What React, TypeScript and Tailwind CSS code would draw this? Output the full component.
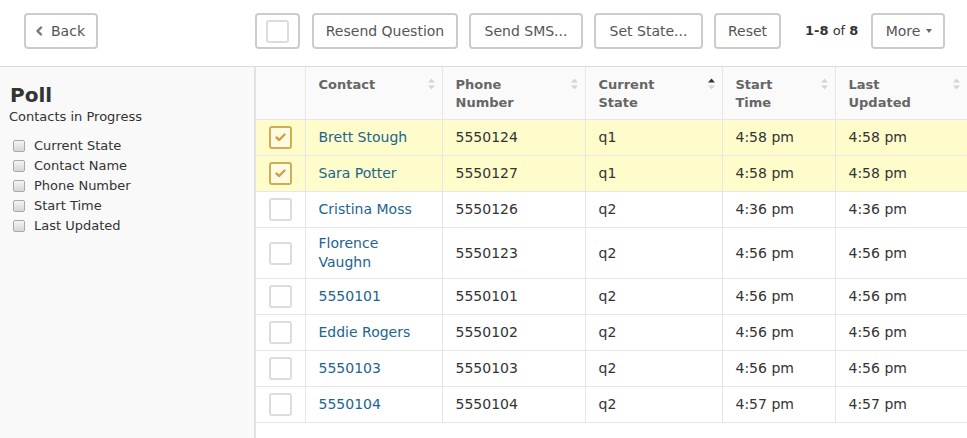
import React from "react";

type Row = { name: string; phone: string; state: string; start: string; updated: string; checked?: boolean };

const rows: Row[] = [
  { name: "Brett Stough", phone: "5550124", state: "q1", start: "4:58 pm", updated: "4:58 pm", checked: true },
  { name: "Sara Potter", phone: "5550127", state: "q1", start: "4:58 pm", updated: "4:58 pm", checked: true },
  { name: "Cristina Moss", phone: "5550126", state: "q2", start: "4:36 pm", updated: "4:36 pm" },
  { name: "Florence Vaughn", phone: "5550123", state: "q2", start: "4:56 pm", updated: "4:56 pm" },
  { name: "5550101", phone: "5550101", state: "q2", start: "4:56 pm", updated: "4:56 pm" },
  { name: "Eddie Rogers", phone: "5550102", state: "q2", start: "4:56 pm", updated: "4:56 pm" },
  { name: "5550103", phone: "5550103", state: "q2", start: "4:56 pm", updated: "4:56 pm" },
  { name: "5550104", phone: "5550104", state: "q2", start: "4:57 pm", updated: "4:57 pm" },
];

function SortIcon({ active }: { active?: boolean }) {
  return (
    <svg width="9" height="14" viewBox="0 0 9 14" className="shrink-0 mt-[1px]">
      <path d="M4.5 1.5 L8 5.5 L1 5.5 Z" fill={active ? "#333" : "#d4d4d4"} />
      <path d="M4.5 12.5 L8 8.5 L1 8.5 Z" fill="#d4d4d4" />
    </svg>
  );
}

function Check({ checked }: { checked?: boolean }) {
  if (checked) {
    return (
      <div className="w-[23px] h-[23px] rounded-[3px] border-2 border-[#cfae52] bg-[#fffbe3] flex items-center justify-center">
        <svg width="11" height="9" viewBox="0 0 11 9">
          <path d="M1.5 4.5 L4.2 7 L9.5 1.5" stroke="#c9a440" strokeWidth="2.4" fill="none" strokeLinecap="round" strokeLinejoin="round" />
        </svg>
      </div>
    );
  }
  return <div className="w-[23px] h-[23px] rounded-[3px] border-2 border-[#dcdcdc] bg-white" />;
}

function Btn({ children, className = "" }: { children: React.ReactNode; className?: string }) {
  return (
    <div className={"h-[36px] flex items-center justify-center rounded-[4px] border-2 border-[#cccccc] bg-white text-[14px] text-[#555] " + className}>
      {children}
    </div>
  );
}

function Header({ lines, active }: { lines: string[]; active?: boolean }) {
  return (
    <th className="align-top text-left border-r border-b border-[#e6e6e6] pl-[13px] pr-[6px] pt-[9px] pb-[7px] font-bold text-[13px] leading-[18px] text-[#666]">
      <div className="flex justify-between items-start">
        <span>
          {lines.map((l, i) => (
            <React.Fragment key={i}>
              {i > 0 && <br />}
              {l}
            </React.Fragment>
          ))}
        </span>
        <SortIcon active={active} />
      </div>
    </th>
  );
}

function SideCheck({ label }: { label: string }) {
  return (
    <div className="flex items-center h-[20px]">
      <div className="w-[12px] h-[12px] ml-[13px] rounded-[2px] border border-[#a9a9a9] bg-gradient-to-b from-[#f4f4f4] to-[#d6d6d6]" />
      <span className="ml-[9px] text-[13px] text-[#333]">{label}</span>
    </div>
  );
}

export default function App() {
  return (
    <div className="w-[967px] h-[438px] overflow-hidden flex flex-col bg-white" style={{ fontFamily: '"DejaVu Sans", Verdana, sans-serif' }}>
      <div className="h-[67px] shrink-0 border-b border-[#dddddd] flex items-start pt-[13px] pl-[24px] pr-[22px]">
        <Btn className="w-[74px] gap-[8px] pr-[2px]">
          <svg width="8" height="10" viewBox="0 0 8 10">
            <path d="M6 1.5 L2.5 5 L6 8.5" stroke="#777" strokeWidth="2.4" fill="none" strokeLinecap="round" strokeLinejoin="round" />
          </svg>
          <span>Back</span>
        </Btn>
        <div className="ml-auto flex items-center gap-[11px]">
          <Btn className="w-[45px] mr-[1px]">
            <div className="w-[23px] h-[23px] rounded-[3px] border-2 border-[#dcdcdc]" />
          </Btn>
          <Btn className="w-[146px]">Resend Question</Btn>
          <Btn className="w-[114px]">Send SMS...</Btn>
          <Btn className="w-[109px]">Set State...</Btn>
          <Btn className="w-[67px]">Reset</Btn>
          <div className="ml-[13px] mr-[-1px] w-[56px] text-[13px] text-[#333] whitespace-nowrap">
            <span className="font-bold">1-8</span> of <span className="font-bold">8</span>
          </div>
          <Btn className="w-[74px] gap-[6px] pl-[2px]">
            <span>More</span>
            <svg width="6" height="4" viewBox="0 0 6 4">
              <path d="M0 0 L6 0 L3 4 Z" fill="#666" />
            </svg>
          </Btn>
        </div>
      </div>
      <div className="flex flex-1 min-h-0">
        <div className="w-[256px] shrink-0 bg-[#f9f9f9] border-r-2 border-[#e2e2e2] pt-[16px]">
          <div className="pl-[10px] text-[20px] leading-[24px] font-bold text-[#333]">Poll</div>
          <div className="pl-[9px] mt-[1px] text-[13px] leading-[17px] text-[#333]">Contacts in Progress</div>
          <div className="mt-[11px]">
            <SideCheck label="Current State" />
            <SideCheck label="Contact Name" />
            <SideCheck label="Phone Number" />
            <SideCheck label="Start Time" />
            <SideCheck label="Last Updated" />
          </div>
        </div>
        <div className="flex-1 min-w-0">
          <table className="table-fixed border-collapse w-[711px]">
            <colgroup>
              <col className="w-[49px]" />
              <col className="w-[137px]" />
              <col className="w-[143px]" />
              <col className="w-[137px]" />
              <col className="w-[113px]" />
              <col className="w-[132px]" />
            </colgroup>
            <thead>
              <tr className="bg-[#fafafa]">
                <th className="border-r border-b border-[#e6e6e6]" />
                <Header lines={["Contact"]} />
                <Header lines={["Phone", "Number"]} />
                <Header lines={["Current", "State"]} active />
                <Header lines={["Start", "Time"]} />
                <Header lines={["Last", "Updated"]} />
              </tr>
            </thead>
            <tbody>
              {rows.map((r, i) => (
                <tr key={i} className={r.checked ? "bg-[#fdfcca]" : "bg-white"}>
                  <td className="border-r border-b border-[#e6e6e6] py-[6px]">
                    <div className="flex justify-center">
                      <Check checked={r.checked} />
                    </div>
                  </td>
                  <td className="border-r border-b border-[#e6e6e6] px-[13px] py-[6px] text-[14px] leading-[19px] text-[#22648f]">{r.name}</td>
                  <td className="border-r border-b border-[#e6e6e6] px-[13px] py-[6px] text-[14px] leading-[19px] text-[#333]">{r.phone}</td>
                  <td className="border-r border-b border-[#e6e6e6] px-[13px] py-[6px] text-[14px] leading-[19px] text-[#333]">{r.state}</td>
                  <td className="border-r border-b border-[#e6e6e6] px-[13px] py-[6px] text-[14px] leading-[19px] text-[#333]">{r.start}</td>
                  <td className="border-b border-[#e6e6e6] px-[13px] py-[6px] text-[14px] leading-[19px] text-[#333]">{r.updated}</td>
                </tr>
              ))}
            </tbody>
          </table>
        </div>
      </div>
    </div>
  );
}
